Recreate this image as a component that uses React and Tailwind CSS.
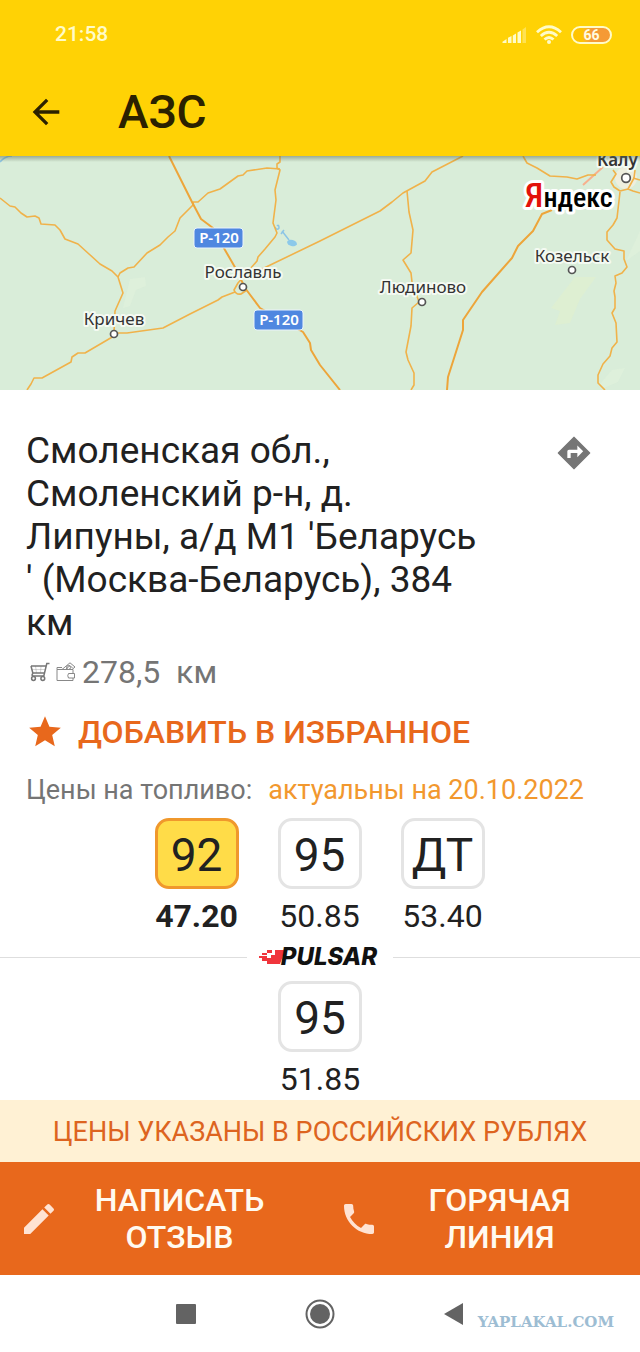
import { MdArrowBack, MdEdit, MdPhone, MdStar } from 'react-icons/md';

const ROADS = [
  'M0 42 L5 46 L10 50 L15 51 L21 57 L27 61 L35 60 L39 62 L41 68 L55 69 L60 74 L65 83 L78 88 L89 98 L100 108 L112 115 L118 121 L123 137 L115 155 L114 177',
  'M118 121 L120 117 L128 112 L134 111 L147 97 L160 89 L168 81 L175 75 L180 62 L193 49 L193 46 L198 46 L208 37 L220 33 L238 20 L243 19 L247 15 L267 12 L280 13',
  'M280 0 L280 6 L277 8 L277 12 L280 14 L275 34 L276 44 L273 67 L277 77 L275 81 L265 93 L258 101 L257 105 L250 113 L238 127 L234 134 Q236 139 241 138 L247 134',
  'M114 177 L127 177 L163 172 L190 158 L218 144 L222 141 L235 136',
  'M114 180 L85 197 L78 197 L72 201 L71 206 L42 222 L34 222 L31 228 L27 234',
  'M262 113 L320 85 L380 55 L392 46 L403 37 L425 25 L432 16 L463 0',
  'M407 35 L409 56 L413 74 L411 97 L403 104 L411 117 L412 126 L419 146 L412 152 L411 170 L406 196 L408 204 L414 217 L414 229 L411 234',
  'M523 0 L527 7 L537 12 L550 20 L567 21 L577 23 L588 19 L596 19',
  'M613 14 L616 18 L611 26 L614 31 L620 35 L628 33 L633 35 L640 37 M628 33 L634 22 L635 14 M633 22 L640 24',
  'M620 36 L617 62 L613 69 L607 76 L607 84 L615 93 L624 95 L624 103 L627 111 L622 117 L615 120 L616 127 L614 135 L615 141 L615 152 L612 157 L616 167 L617 186 L612 192 L610 200 L603 208 L598 219 L598 227 L605 234',
];

const HIGHWAYS = [
  'M169 0 L192 46 L201 63 L213 72 L225 94 L236 113 L245 132 L260 152 L303 176 L310 187 L311 194 L320 209 L340 234',
  'M552 54 L542 58 L533 75 L518 90 L512 102 L497 119 L482 136 L463 164 L463 174 L448 221 L447 234',
];

const TOWNS = [
  { name: 'Кричев', x: 114, y: 169, cx: 114, cy: 178 },
  { name: 'Рославль', x: 243, y: 122, cx: 243, cy: 131 },
  { name: 'Людиново', x: 423, y: 137, cx: 422, cy: 146 },
  { name: 'Козельск', x: 572, y: 106, cx: 572, cy: 114 },
];

const SIGNS = [
  { x: 194, y: 72 },
  { x: 254, y: 154 },
];

const FUELS = [
  { name: '92', price: '47.20', active: true },
  { name: '95', price: '50.85' },
  { name: 'ДТ', price: '53.40' },
];

const StatusBar = () => (
  <div className="flex h-[70px] items-center justify-between pl-[55px] pr-[28px]">
    <span className="text-[21px] font-medium text-[#fffbc8]">21:58</span>
    <div className="flex items-center gap-[9px]">
      <svg width="25" height="18" viewBox="0 0 25 18" fill="#fffbc8" aria-hidden="true">
        <path d="M0.500 17 V15.800 L4.500 13 V17 Z" />
        <path d="M6 17 V11.800 L9.500 10 V17 Z" />
        <path d="M10.800 17 V9.500 L14 7.500 V17 Z" />
        <path d="M15.500 17 V6.500 L19 4.500 V17 Z" />
        <path d="M20.500 17 V3.500 L24 1 V17 Z" opacity="0.4" />
      </svg>
      <svg width="26" height="20" viewBox="0 0 26 20" fill="none" stroke="#fffbc8" strokeWidth="2.800" aria-hidden="true">
        <path d="M1 7.200 Q13 -3.800 25 7.200" />
        <path d="M4.800 11 Q13 3.500 21.200 11" />
        <path d="M8.500 14.600 Q13 10.400 17.500 14.600" />
        <circle cx="13" cy="17" r="2" fill="#fffbc8" stroke="none" />
      </svg>
      <span className="flex h-[18px] w-[41px] items-center justify-center rounded-full border-2 border-[#fffbc8] bg-linear-to-r from-[#ffc400] from-25% to-[#f59a35] to-50% text-[14px] font-bold text-[#fffbe0]">
        66
      </span>
    </div>
  </div>
);

const StationMap = () => (
  <svg
    className="block w-full bg-[#d9edd9]"
    viewBox="0 0 640 234"
    role="img"
    aria-label="Карта"
    fontFamily="'Noto Sans', 'Open Sans', sans-serif"
  >
    <defs>
      <linearGradient id="shade" x1="0" y1="0" x2="0" y2="1">
        <stop offset="0" stopColor="#5b6b52" stopOpacity="0.5" />
        <stop offset="1" stopColor="#5b6b52" stopOpacity="0" />
      </linearGradient>
    </defs>
    <path d="M575 121 L596 121 L580 143 L570 167 L555 169 L560 155 L551 152 Z" fill="#dff0cf" opacity="0.7" />
    <path d="M130 123 L145 121 L146 130 L136 134 L130 150 L123 152 Z" fill="#e0f1dc" opacity="0.7" />
    <path d="M600 228 L612 214 L625 212 L618 226 L604 232 Z M640 75 L626 105 L640 95 Z" fill="#e0f1dc" opacity="0.7" />
    <path d="M0 6 Q5 0 12 0 M277 70 Q279 68 279 72 Q277 75 275 71 M282 75 L289 84 M284 74 L281 78" fill="none" stroke="#8cc5e6" strokeWidth="1.500" />
    <ellipse cx="292" cy="87" rx="5" ry="3" fill="#8cc9ea" transform="rotate(15 292 87)" />
    <path d="M583 29 L603 11" stroke="#f7b08d" strokeWidth="2" />
    <circle cx="626" cy="22" r="11" fill="#f3efdf" opacity="0.8" />
    <g fill="none" stroke="#f0b24a" strokeWidth="1.600" strokeLinejoin="round">
      {ROADS.map((d) => <path key={d} d={d} />)}
    </g>
    <g fill="none" stroke="#eda53a" strokeWidth="2" strokeLinejoin="round">
      {HIGHWAYS.map((d) => <path key={d} d={d} />)}
    </g>
    {SIGNS.map((s) => (
      <g key={s.x}>
        <rect x={s.x} y={s.y} width="49" height="20" rx="3" fill="#4f87e0" stroke="#eaf3fb" strokeWidth="1" />
        <text x={s.x + 25} y={s.y + 15} textAnchor="middle" fontSize="15" fontWeight="600" fill="#fff">Р-120</text>
      </g>
    ))}
    <g fontSize="17" fill="#333" stroke="#f4faf2" strokeWidth="4" paintOrder="stroke" strokeLinejoin="round" textAnchor="middle">
      {TOWNS.map((t) => <text key={t.name} x={t.x} y={t.y}>{t.name}</text>)}
      <text x="597" y="10" textAnchor="start" fontWeight="600">Калу</text>
    </g>
    <g fill="#fff" stroke="#555" strokeWidth="1.700">
      {TOWNS.map((t) => <circle key={t.name} cx={t.cx} cy={t.cy} r="3.500" />)}
      <circle cx="626" cy="22" r="4.300" />
    </g>
    <text
      x="525"
      y="51"
      fontFamily="'Liberation Sans Narrow', 'Roboto Condensed', 'DejaVu Sans Condensed', sans-serif"
      fontSize="28"
      fontWeight="500"
      stroke="#fff"
      strokeWidth="6"
      paintOrder="stroke"
      strokeLinejoin="round"
    >
      <tspan fill="#e3120b" fontSize="34">Я</tspan>ндекс
    </text>
    <rect width="640" height="6" fill="url(#shade)" />
  </svg>
);

const RouteIcon = () => (
  <svg width="40" height="40" viewBox="0 0 24 24" aria-hidden="true">
    <path d="M12 2.700 L21.300 12 L12 21.300 L2.700 12 Z" fill="currentColor" stroke="currentColor" strokeWidth="1" strokeLinejoin="round" />
    <path d="M8 15 V11 Q8 10 9 10 H14 V7.500 L17.500 11 L14 14.500 V12 H10 V15 Z" fill="#fff" />
  </svg>
);

const CartIcon = () => (
  <svg width="20" height="20" viewBox="0 0 20 20" fill="none" stroke="#777" strokeWidth="1.500" aria-hidden="true">
    <path d="M19.500 1.500 H16.800 L13.800 14 H2.500 M1 4 H16 M1 4 L2.800 11 H14.500 M2.500 14 Q1.500 13 3 11" />
    <path d="M5.500 4 L6.500 11 M11 4 L10.500 11 M2 7.500 H15" strokeWidth="0.300" />
    <circle cx="3.500" cy="16.500" r="1.900" />
    <circle cx="12.800" cy="16.500" r="1.900" />
  </svg>
);

const WalletIcon = () => (
  <svg width="20" height="20" viewBox="0 0 20 20" fill="none" stroke="#888" strokeWidth="1" aria-hidden="true">
    <path d="M17 11 V7.500 H1 V18.500 H17 V16 M1 7.500 V5.500 L6 5.500 M12.500 11.500 H18.500 V16 H12.500 Q11 13.700 12.500 11.500 Z" />
    <path d="M6 7.500 L14 0.800 L19 5 L16 7.500 M9.500 7.500 L14 3.500 L16.500 6" />
    <circle cx="12.500" cy="5.500" r="2" />
  </svg>
);

const Fuel = ({ name, price, active }) => (
  <div className="flex w-[84px] flex-col items-center">
    <button
      type="button"
      className={`flex h-[71px] w-full items-center justify-center rounded-[14px] border-3 pt-[3px] text-[46px] leading-none ${active ? 'border-[#f0982c] bg-[#ffdc48]' : 'border-[#e4e4e4] bg-white'}`}
    >
      {name}
    </button>
    <span className={`mt-[7px] text-[32px] leading-10 ${active ? 'font-bold' : ''}`}>{price}</span>
  </div>
);

const PulsarLogo = () => (
  <div className="flex h-6 items-center">
    <svg className="-mr-1" width="26" height="16" viewBox="0 0 26 16" fill="#f0353c" aria-hidden="true">
      <path d="M16 1 H26 L21 15 H8 V12 H3 V9 H0 V7 H8 V9 H12 V6 H16 Z" />
      <path d="M8 1 H13 V4 H8 Z M3 4 H8 V6 H3 Z" />
    </svg>
    <span className="pr-1 font-[Inter,sans-serif] text-[24px] font-extrabold italic leading-6 text-[#111]">PULSAR</span>
  </div>
);

const App = () => (
  <div className="flex min-h-screen flex-col bg-white font-[Roboto,sans-serif] text-[#212121]">
    <header className="bg-[#ffd205]">
      <StatusBar />
      <div className="flex h-[86px] items-center pb-[2px] pl-[26px]">
        <button type="button" aria-label="Назад" className="text-[#2b2100]">
          <MdArrowBack size={40} />
        </button>
        <h1 className="ml-[52px] text-[46px] font-medium leading-none text-[#2b2100]">АЗС</h1>
      </div>
    </header>

    <StationMap />

    <main className="flex-1">
      <section className="pl-[26px] pt-[39px]">
        <div className="flex justify-between pr-[46px]">
          <p className="text-[37px] leading-[43px]">
            Смоленская обл.,<br />
            Смоленский р-н, д.<br />
            Липуны, а/д М1 'Беларусь<br />
            ' (Москва-Беларусь), 384<br />
            км
          </p>
          <button type="button" aria-label="Маршрут" className="mt-1 self-start text-[#757575]">
            <RouteIcon />
          </button>
        </div>
        <div className="mt-2 flex items-center gap-[6px] pl-1 text-[32px] leading-10 text-[#757575]">
          <CartIcon />
          <WalletIcon />
          <span className="whitespace-pre">278,5  км</span>
        </div>
        <button type="button" className="mt-5 flex items-center gap-[14px] text-[32px] font-medium leading-10 text-[#e8681c]">
          <MdStar size={38} />
          ДОБАВИТЬ В ИЗБРАННОЕ
        </button>
        <p className="mt-5 flex gap-4 text-[27px] leading-9 text-[#757575]">
          Цены на топливо:
          <span className="text-[#f2982e]">актуальны на 20.10.2022</span>
        </p>
      </section>

      <section className="mt-[10px] flex justify-center gap-[39px] pr-px">
        {FUELS.map((fuel) => <Fuel key={fuel.name} {...fuel} />)}
      </section>

      <div className="mt-[9px] flex items-center gap-3">
        <hr className="flex-1 border-[#dedede]" />
        <PulsarLogo />
        <hr className="flex-1 border-[#dedede]" />
      </div>

      <section className="mt-3 flex justify-center">
        <Fuel name="95" price="51.85" />
      </section>
    </main>

    <p className="flex h-[62px] items-center justify-center bg-[#fff1d4] pt-[2px] text-[27px] text-[#dd6420]">
      ЦЕНЫ УКАЗАНЫ В РОССИЙСКИХ РУБЛЯХ
    </p>

    <div className="grid h-[113px] grid-cols-2 bg-[#e8681c] text-[32px] font-medium leading-[37px] text-[#fffaf0]">
      <button type="button" className="flex items-center pl-[19px]">
        <MdEdit size={40} className="text-[#ffe3d3]" />
        <span className="flex-1 pl-2 pr-7">НАПИСАТЬ ОТЗЫВ</span>
      </button>
      <button type="button" className="flex items-center pl-[19px]">
        <MdPhone size={40} className="text-[#ffe3d3]" />
        <span className="flex-1 pl-2 pr-7">ГОРЯЧАЯ ЛИНИЯ</span>
      </button>
    </div>

    <nav className="relative flex h-[77px] items-center justify-center gap-[106px] text-[#636363]">
      <button type="button" aria-label="Недавние">
        <svg width="26" height="26" viewBox="0 0 26 26" fill="currentColor"><rect x="3" y="3" width="20" height="20" rx="1" /></svg>
      </button>
      <button type="button" aria-label="Домой">
        <svg width="30" height="30" viewBox="0 0 30 30" fill="currentColor">
          <circle cx="15" cy="15" r="13.500" fill="none" stroke="currentColor" strokeWidth="2" />
          <circle cx="15" cy="15" r="10" />
        </svg>
      </button>
      <button type="button" aria-label="Назад">
        <svg width="26" height="26" viewBox="0 0 26 26" fill="currentColor"><path d="M22 2 V24 L3 13 Z" /></svg>
      </button>
      <span className="absolute bottom-[18px] right-[26px] font-['DejaVu_Serif',serif] text-[15px] font-bold leading-6 text-[#9dbdd3]">
        YAPLAKAL.COM
      </span>
    </nav>
  </div>
);

export default App;
